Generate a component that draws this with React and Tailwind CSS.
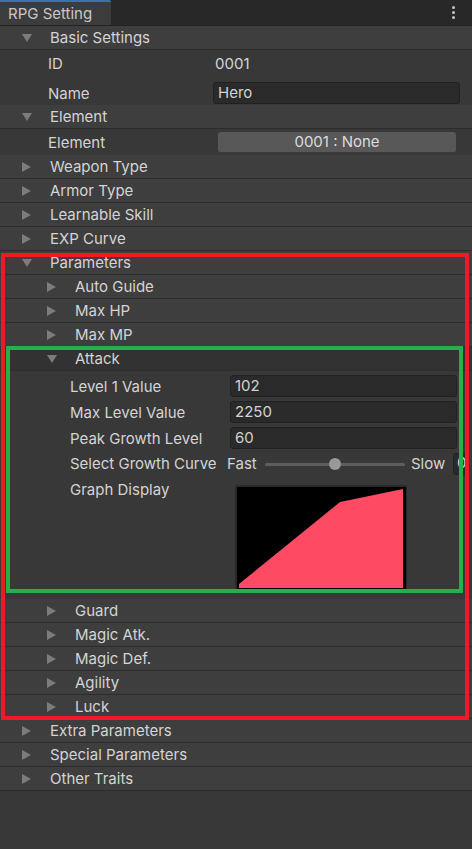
import React from "react";

const DownTri = () => (
  <svg width="10" height="8" viewBox="0 0 10 8" className="block">
    <polygon points="0,0 10,0 5,8" fill="#7c7c7c" />
  </svg>
);
const RightTri = () => (
  <svg width="9" height="10" viewBox="0 0 9 10" className="block">
    <polygon points="0,0 9,5 0,10" fill="#7c7c7c" />
  </svg>
);

function Header({ label, open, level = 1, dark = false }) {
  return (
    <div
      className={
        "h-[24px] flex items-center border-b border-[#2c2c2c] " +
        (dark ? "bg-[#323232]" : "bg-[#3e3e3e]")
      }
    >
      <div className={"w-[28px] flex items-center " + (level === 1 ? "ml-[22px]" : "ml-[47px]")}>
        {open ? <DownTri /> : <RightTri />}
      </div>
      <span className="text-[15px] leading-[18px] text-[#d4d4d4]">{label}</span>
    </div>
  );
}

function Field({ value, className = "" }) {
  return (
    <div
      className={
        "h-[22px] rounded-[3px] bg-[#2a2a2a] border border-[#212121] flex items-center pl-[4px] text-[15px] leading-[18px] text-[#d2d2d2] " +
        className
      }
    >
      {value}
    </div>
  );
}

function AttackRow({ label, value }) {
  return (
    <div className="h-[26px] flex items-center">
      <div className="w-[160px] ml-[70px] mt-[2px] text-[15px] leading-[18px] text-[#d4d4d4]">{label}</div>
      <Field value={value} className="w-[227px]" />
    </div>
  );
}

function Graph() {
  return (
    <svg width="172" height="105" viewBox="0 0 172 105" className="block">
      <rect x="0" y="0" width="172" height="105" rx="2" fill="#2a2a2a" />
      <rect x="2" y="2" width="169" height="102" fill="#000000" />
      <polygon points="4,99 105,17 168,4 168,103 4,103" fill="#ff4a63" />
    </svg>
  );
}

export default function App() {
  return (
    <div className="relative w-[472px] h-[849px] bg-[#383838] overflow-hidden font-['Inter','Noto_Sans',sans-serif]">
      {/* Tab bar */}
      <div className="h-[26px] bg-[#282828] flex items-stretch border-b border-[#232323]">
        <div className="w-[111px] bg-[#3c3c3c] border-t-2 border-[#3a72b0] rounded-tr-[2px] flex items-center pl-[8px] text-[15px] leading-[18px] text-[#c8c8c8]">
          RPG Setting
        </div>
        <div className="flex-1" />
        <div className="w-[20px] mr-[9px] flex flex-col items-center justify-center gap-[2px]">
          <div className="w-[3px] h-[3px] rounded-full bg-[#c4c4c4]" />
          <div className="w-[3px] h-[3px] rounded-full bg-[#c4c4c4]" />
          <div className="w-[3px] h-[3px] rounded-full bg-[#c4c4c4]" />
        </div>
      </div>

      <Header label="Basic Settings" open />
      <div className="h-[55px] pt-[1px] bg-[#383838]">
        <div className="h-[26px] flex items-center text-[15px] leading-[18px] text-[#d4d4d4]">
          <div className="ml-[48px] w-[167px]">ID</div>
          <div>0001</div>
        </div>
        <div className="h-[26px] mt-[3px] flex items-center text-[15px] leading-[18px] text-[#d4d4d4]">
          <div className="ml-[48px] w-[165px] mt-[2px]">Name</div>
          <Field value="Hero" className="w-[247px]" />
        </div>
      </div>

      <Header label="Element" open />
      <div className="h-[26px] flex items-center text-[15px] leading-[18px] text-[#d4d4d4]">
        <div className="ml-[48px] w-[170px] mt-[1px]">Element</div>
        <div className="w-[238px] h-[21px] rounded-[3px] bg-[#585858] border-b border-[#3a3a3a] flex items-center justify-center text-[#dcdcdc]">
          0001 : None
        </div>
      </div>

      <Header label="Weapon Type" />
      <Header label="Armor Type" />
      <Header label="Learnable Skill" />
      <Header label="EXP Curve" />
      <Header label="Parameters" open />
      <Header label="Auto Guide" level={2} />
      <Header label="Max HP" level={2} />
      <Header label="Max MP" level={2} />
      <Header label="Attack" level={2} open dark />

      {/* Attack content */}
      <div className="h-[228px] pt-[2px] bg-[#383838]">
        <AttackRow label="Level 1 Value" value="102" />
        <AttackRow label="Max Level Value" value="2250" />
        <AttackRow label="Peak Growth Level" value="60" />
        <div className="h-[26px] flex items-center text-[15px] leading-[18px] text-[#d4d4d4]">
          <div className="w-[157px] ml-[70px]">Select Growth Curve</div>
          <div className="w-[38px]">Fast</div>
          <div className="relative w-[140px] h-[14px] flex items-center">
            <div className="w-full h-[3px] rounded-full bg-[#5e5e5e]" />
            <div className="absolute left-[64px] top-[1px] w-[12px] h-[12px] rounded-full bg-[#999999]" />
          </div>
          <div className="ml-[6px] w-[42px]">Slow</div>
          <div className="w-[14px] h-[22px] rounded-l-[3px] bg-[#2a2a2a] border border-[#212121] overflow-hidden pl-[3px] text-[#d2d2d2]">
            0
          </div>
        </div>
        <div className="flex items-start">
          <div className="w-[165px] ml-[70px] mt-[4px] text-[15px] leading-[18px] text-[#d4d4d4]">Graph Display</div>
          <div className="mt-[8px]">
            <Graph />
          </div>
        </div>
      </div>

      <Header label="Guard" level={2} />
      <Header label="Magic Atk." level={2} />
      <Header label="Magic Def." level={2} />
      <Header label="Agility" level={2} />
      <Header label="Luck" level={2} />
      <Header label="Extra Parameters" />
      <Header label="Special Parameters" />
      <Header label="Other Traits" />

      {/* Annotation overlays */}
      <div className="absolute left-[1px] top-[253px] w-[468px] h-[467px] border-4 border-[#ed1c24] pointer-events-none" />
      <div className="absolute left-[6px] top-[346px] w-[457px] h-[247px] border-4 border-[#22b14c] pointer-events-none" />
    </div>
  );
}
